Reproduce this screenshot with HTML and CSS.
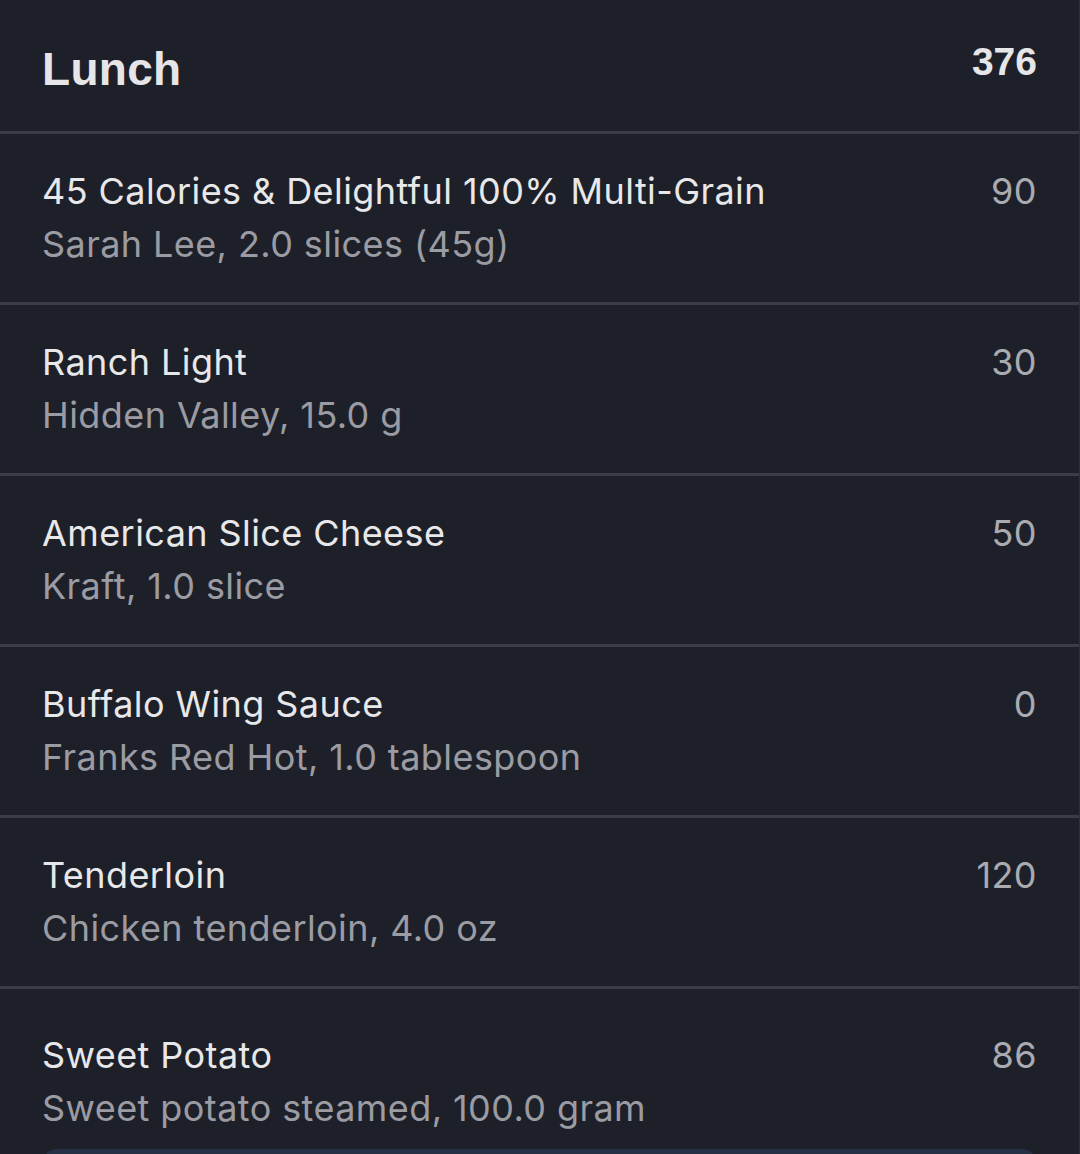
FILE: index.html
```html
<!DOCTYPE html>
<html lang="en">
<head>
<meta charset="utf-8">
<title>Lunch</title>
<link rel="stylesheet" href="styles.css">
</head>
<body>
<section class="meal">
  <header class="meal-header">
    <h1 class="meal-title">Lunch</h1>
    <span class="meal-total">376</span>
  </header>
  <ul class="food-list">
    <li class="food">
      <div class="food-info">
        <div class="food-name">45 Calories &amp; Delightful 100% Multi-Grain</div>
        <div class="food-detail">Sarah Lee, 2.0 slices (45g)</div>
      </div>
      <span class="food-cal">90</span>
    </li>
    <li class="food">
      <div class="food-info">
        <div class="food-name">Ranch Light</div>
        <div class="food-detail">Hidden Valley, 15.0 g</div>
      </div>
      <span class="food-cal">30</span>
    </li>
    <li class="food">
      <div class="food-info">
        <div class="food-name">American Slice Cheese</div>
        <div class="food-detail">Kraft, 1.0 slice</div>
      </div>
      <span class="food-cal">50</span>
    </li>
    <li class="food">
      <div class="food-info">
        <div class="food-name">Buffalo Wing Sauce</div>
        <div class="food-detail">Franks Red Hot, 1.0 tablespoon</div>
      </div>
      <span class="food-cal">0</span>
    </li>
    <li class="food">
      <div class="food-info">
        <div class="food-name">Tenderloin</div>
        <div class="food-detail">Chicken tenderloin, 4.0 oz</div>
      </div>
      <span class="food-cal">120</span>
    </li>
    <li class="food food-last">
      <div class="food-info">
        <div class="food-name">Sweet Potato</div>
        <div class="food-detail">Sweet potato steamed, 100.0 gram</div>
      </div>
      <span class="food-cal">86</span>
    </li>
  </ul>
  <div class="add-bar"></div>
</section>
</body>
</html>
```
FILE: styles.css
```css
html, body {
  margin: 0;
  padding: 0;
  background: #1e2029;
}
body {
  width: 1080px;
  height: 1154px;
  overflow: hidden;
  font-family: Inter, "Noto Sans", sans-serif;
  border-right: 1px solid #2c2f38;
  box-sizing: border-box;
}
.meal {
  display: flex;
  flex-direction: column;
}
.meal-header {
  display: flex;
  justify-content: space-between;
  align-items: flex-start;
  height: 131px;
  padding: 0 42px 0 42px;
  border-bottom: 3px solid #3a3c45;
  box-sizing: content-box;
}
.meal-title {
  margin: 46px 0 0 0;
  font-family: "Liberation Sans", Arial, sans-serif;
  font-weight: 700;
  font-size: 46px;
  line-height: 46px;
  letter-spacing: 0.3px;
  color: #e6e6e8;
}
.meal-total {
  margin-top: 43px;
  font-family: "Liberation Sans", Arial, sans-serif;
  font-weight: 700;
  font-size: 39px;
  line-height: 38px;
  color: #e6e6e8;
}
.food-list {
  list-style: none;
  margin: 0;
  padding: 0;
}
.food {
  display: flex;
  justify-content: space-between;
  align-items: flex-start;
  padding: 31px 42px 31px 42px;
  border-bottom: 3px solid #3a3c45;
  font-size: 36px;
  line-height: 53px;
  letter-spacing: 0.42px;
}
.food-last {
  padding-top: 40px;
  padding-bottom: 0;
  border-bottom: none;
}
.food-name {
  color: #e8e8ea;
}
.food-detail {
  color: #9b9ca3;
}
.food-cal {
  color: #a9abb1;
}
.add-bar {
  margin: 14px 43px 0 43px;
  height: 40px;
  background: #263044;
  border-radius: 14px 14px 0 0;
}
```
